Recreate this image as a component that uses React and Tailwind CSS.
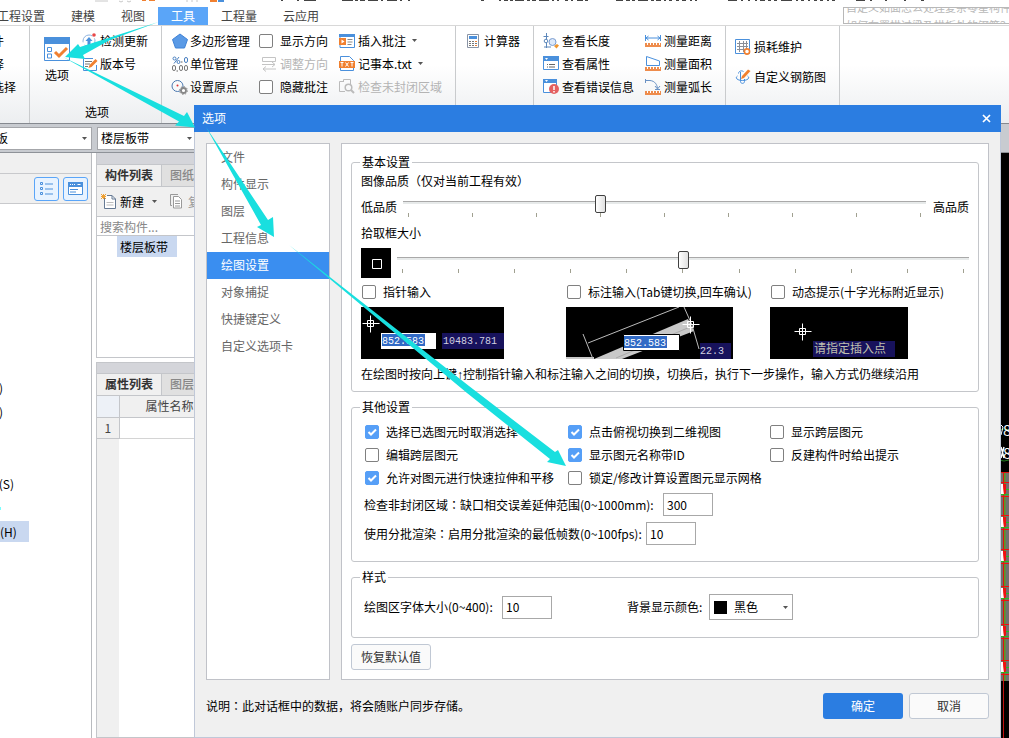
import React, { useState } from "react";

const BLUE = "#4a90dc";
const ORANGE = "#f08030";

function Svg({ w = 18, h = 16, children }) {
  return (
    <svg width={w} height={h} viewBox={`0 0 ${w} ${h}`} className="shrink-0" fill="none" aria-hidden="true">
      {children}
    </svg>
  );
}

function Caret({ className = "" }) {
  return (
    <svg width="5" height="3" viewBox="0 0 5 3" className={`shrink-0 ${className}`} aria-hidden="true">
      <path d="M0 0h5L2.5 3z" fill="#555" />
    </svg>
  );
}

function Colon() {
  return <span className="font-['Noto_Sans_CJK_TC',sans-serif]">：</span>;
}

const Icons = {
  options: (
    <Svg w={26} h={24}>
      <path d="M.5.5h25v23H.5z" fill="#fff" stroke={BLUE} />
      <path d="M0 0h26v7H0z" fill={BLUE} />
      <path d="M3.5 10.500h4v4h-4zM3.500 17h4v4h-4z" stroke={BLUE} />
      <path d="M11 15l4 4 8-8" stroke={ORANGE} strokeWidth="3" />
    </Svg>
  ),
  update: (
    <Svg w={14} h={16}>
      <circle cx="7" cy="8" r="6" stroke="#8fb4e0" strokeDasharray="14 3" />
      <path d="M7 4l3.500 4H8.500v4h-3V8h-2z" fill={BLUE} />
      <circle cx="12" cy="2" r="1.800" fill="#e84848" />
    </Svg>
  ),
  version: (
    <Svg w={16} h={16}>
      <path d="M14.500 9v5.500H1.500v-12H11" stroke={BLUE} />
      <path d="M3 5.500h7M3 8h5M3 10.500h3" stroke="#777" />
      <path d="M6.500 12l1-3L13.500 3l2 2-6 6z" fill={ORANGE} />
    </Svg>
  ),
  polygon: (
    <Svg>
      <path d="M9 1l7.500 5.500L13.500 15h-9L1.500 6.500z" fill="#5a9ae6" stroke="#3f82d6" />
    </Svg>
  ),
  unit: (
    <Svg>
      <circle cx="3.500" cy="2.500" r="1.500" stroke="#4a80c0" />
      <circle cx="7.500" cy="6" r="1.500" stroke="#4a80c0" />
      <path d="M8 1L3 7.500" stroke="#4a80c0" />
      <rect x="13.500" y="1.500" width="3" height="5" rx="1.500" stroke="#4a80c0" />
      <path d="M10 6h1.500M5.500 15H7" stroke="#666" />
      <rect x="1.500" y="9.500" width="3" height="5" rx="1.500" stroke="#777" />
      <rect x="8.500" y="9.500" width="3" height="5" rx="1.500" stroke="#777" />
      <rect x="13.500" y="9.500" width="3" height="5" rx="1.500" stroke="#777" />
    </Svg>
  ),
  origin: (
    <Svg>
      <circle cx="6.500" cy="7" r="5.500" stroke="#4a78b0" />
      <circle cx="6.500" cy="6.500" r="1" fill="#d33" />
      <circle cx="12.500" cy="11.500" r="2.500" fill="#fff" stroke="#888" strokeWidth="1.800" />
      <circle cx="12.500" cy="11.500" r="3.900" stroke="#888" strokeDasharray="1.500 1.500" />
    </Svg>
  ),
  adjust: (
    <Svg w={16} h={16}>
      <path d="M1.500 1.500h13v4h-13zM1 8.500h13M11 6l3 2.500L11 11M15 13H2M5 10.500L2 13l3 2.500" stroke="#c4c4c4" />
    </Svg>
  ),
  annotate: (
    <Svg w={16} h={14}>
      <path d="M1 .5h14.500v13H1z" stroke={BLUE} />
      <path d="M0 0h16v3H0z" fill={BLUE} />
      <path d="M0 4h7v7H0z" fill={ORANGE} />
      <path d="M2.500 5.500v4l3-2z" fill="#fff" />
      <path d="M8.500 5.500h5M8.500 8h5M8.500 10.500h4" stroke="#888" />
    </Svg>
  ),
  txt: (
    <Svg w={16} h={15}>
      <path d="M1.500 14.500V.5h9l4 4v10z" fill="#fff" stroke={BLUE} />
      <path d="M0 5h16v7H0z" fill={ORANGE} />
      <path d="M1.500 6.500h3M3 6.500v4M6.500 6.500l3 4M9.500 6.500l-3 4M11.500 6.500h3M13 6.500v4" stroke="#fff" />
    </Svg>
  ),
  checkArea: (
    <Svg w={16} h={15}>
      <path d="M4.500 3V.5h7v3M4 2.500H.5v10H6M11.500 3v3" stroke="#bbb" />
      <circle cx="9.500" cy="8.500" r="3.300" stroke="#bbb" strokeWidth="1.500" />
      <path d="M12 11l3 3" stroke="#bbb" strokeWidth="2" />
    </Svg>
  ),
  calc: (
    <Svg w={12} h={14}>
      <path d="M.5.5h11v13H.5z" fill="#fff" stroke="#8a94a4" />
      <path d="M2 2h8v3H2z" fill={BLUE} />
      <path d="M2 7.500h2M5 7.500h2M2 9.500h2M5 9.500h2M8 9.500h2M2 11.500h2M5 11.500h2" stroke="#777" />
      <path d="M8 7.500h2M8 11.500h2" stroke={ORANGE} />
    </Svg>
  ),
  length: (
    <Svg w={17} h={16}>
      <path d="M3.500 0v15M.5 3.500h5M1 14h7" stroke="#5c87ba" />
      <circle cx="3" cy="8" r="1.800" fill="#fff" stroke="#5c87ba" />
      <circle cx="9.500" cy="9" r="3.500" fill="#dce8f8" stroke="#7a9cd0" />
      <path d="M11 13l3-2 2 1.500-2.500 3z" fill="#f0962c" />
    </Svg>
  ),
  props: (
    <Svg w={17} h={15}>
      <path d="M.5.5h15v13H.5z" fill="#fff" stroke={BLUE} />
      <path d="M0 0h16v5H0z" fill={BLUE} />
      <path d="M2 2h3l-1.500 2z" fill="#fff" />
      <path d="M4 8.500h1M6 8.500h6M4 11h1M6 11h6" stroke="#666" />
    </Svg>
  ),
  errors: (
    <Svg w={17} h={16}>
      <path d="M.5.5h13v13H.5z" fill="#fff" stroke={BLUE} />
      <path d="M0 0h14v4H0z" fill={BLUE} />
      <path d="M2 1h3L3.500 3z" fill="#fff" />
      <circle cx="11" cy="10" r="5" fill="#e46060" />
      <path d="M11 7v4M11 12v1.500" stroke="#fff" strokeWidth="1.500" />
    </Svg>
  ),
  measureDist: (
    <Svg w={16} h={12}>
      <path d="M.5 0v6M15.500 0v6M1 3h14M3.500 1L1 3l2.500 2M12.500 1L15 3l-2.500 2" stroke={BLUE} />
      <path d="M0 8h16v4H0z" fill="#ee8c4c" />
      <path d="M2.500 8v2M5.500 8v2M8.500 8v2M11.500 8v2M14.500 8v2" stroke="#fff" />
    </Svg>
  ),
  measureArea: (
    <Svg w={16} h={15}>
      <path d="M1.500 9.500V.5L14.500 5v4.500z" stroke={BLUE} />
      <path d="M0 11h16v4H0z" fill="#ee8c4c" />
      <path d="M2.500 11v2M5.500 11v2M8.500 11v2M11.500 11v2M14.500 11v2" stroke="#fff" />
    </Svg>
  ),
  measureArc: (
    <Svg w={16} h={16}>
      <path d="M.5 0v4M1 1.500h4c5 .5 7 4 7.500 8M10 7l2.500 3L15 7M10 10.500h5" stroke="#6a92c4" />
      <path d="M0 12h16v4H0z" fill="#ee8c4c" />
      <path d="M2.500 12v2M5.500 12v2M8.500 12v2M11.500 12v2M14.500 12v2" stroke="#fff" />
    </Svg>
  ),
  grid: (
    <Svg w={16} h={16}>
      <path d="M.5.5h14v14H.5z" stroke={BLUE} />
      <path d="M4.500 2v11M8.500 2v11M11.500 2v9M2 4.500h11M2 7.500h11M2 10.500h9" stroke="#8a8f98" />
      <circle cx="12" cy="12.500" r="2.600" fill="#fff" stroke={ORANGE} strokeWidth="1.600" />
    </Svg>
  ),
  rebar: (
    <Svg w={16} h={16}>
      <path d="M5.500 3v9.500c0 2.500 4 2.500 4 0V10M2.500 7c-3 2 0 4.500 5 4.500s8-2.500 5-4.500M8.500 2.500c-2.500-1.500-5 0-5 2" stroke={BLUE} />
      <path d="M6 10l1-3 6-6.500L15.500 2 9 9z" fill={ORANGE} />
    </Svg>
  ),
  newDoc: (
    <Svg w={16} h={16}>
      <path d="M3.500 4v10.500h11V5L11 1.500H6" fill="#fff" stroke="#667a94" />
      <path d="M11 1.500V5h3.500" stroke="#667a94" />
      <path d="M5.500 8.500h7M5.500 11h7" stroke="#bbb" />
      <path d="M0 0l5 5M5 0L0 5M2.500 0v5M0 2.500h5" stroke="#f0a030" />
    </Svg>
  ),
  copy: (
    <Svg w={13} h={15}>
      <path d="M2 11.500H.5V.5H8" stroke="#999" />
      <path d="M3.500 2.500h5l3 3v8.500h-8z" fill="#fff" stroke="#999" />
      <path d="M5 7h5M5 9.500h5M5 12h5" stroke="#999" />
    </Svg>
  ),
};

const BOX =
  "h-[14px] w-[14px] shrink-0 appearance-none rounded-[2px] border border-[#808080] bg-white checked:border-[#569ff7] checked:bg-[#569ff7]";

function Check({ label, defaultChecked = false }) {
  const [on, setOn] = useState(defaultChecked);
  return (
    <label className="flex items-center gap-[7px] whitespace-nowrap">
      <span className="relative flex shrink-0">
        <input type="checkbox" className={BOX} checked={on} onChange={() => setOn(!on)} />
        {on && (
          <svg className="pointer-events-none absolute inset-0" width="14" height="14" viewBox="0 0 14 14" fill="none">
            <path d="M3.500 7l2.500 2.500 5-5" stroke="#fff" strokeWidth="2" />
          </svg>
        )}
      </span>
      {label}
    </label>
  );
}

function Tool({ icon, label, disabled, caret, slot = "w-[19px]" }) {
  return (
    <button
      type="button"
      disabled={disabled}
      className="flex h-[23px] items-center whitespace-nowrap text-black disabled:text-[#b4b4b4]"
    >
      <span className={`flex shrink-0 ${slot}`}>{icon}</span>
      {label}
      {caret && <Caret className="ml-[6px]" />}
    </button>
  );
}

function Slider({ label, ticks, max, value }) {
  return (
    <div className="flex flex-1 flex-col pb-[3px]">
      <input
        type="range"
        aria-label={label}
        min="0"
        max={max}
        defaultValue={value}
        className="h-[19px] w-full appearance-none bg-[linear-gradient(#a9a9a9_1px,#e7eaea_1px)] bg-[length:100%_3px] bg-[position:0_7px] bg-no-repeat [&::-webkit-slider-thumb]:h-[18px] [&::-webkit-slider-thumb]:w-[11px] [&::-webkit-slider-thumb]:appearance-none [&::-webkit-slider-thumb]:rounded-[2px] [&::-webkit-slider-thumb]:border [&::-webkit-slider-thumb]:border-[#404040] [&::-webkit-slider-thumb]:bg-[linear-gradient(to_right,#ffffff,#e0e0e0)]"
      />
      <div className="flex justify-between px-[5px]">
        {Array.from({ length: ticks }, (_, i) => (
          <span key={i} className="h-[4px] w-px bg-[#a0a090]" />
        ))}
      </div>
    </div>
  );
}

function Group({ title, className = "", children }) {
  return (
    <fieldset className="min-w-0 rounded-[3px] border border-[#c4c6ca]">
      <legend className="ml-[8px] px-[2px]">{title}</legend>
      <div className={className}>{children}</div>
    </fieldset>
  );
}

function Cross({ x, y }) {
  return (
    <path
      d={`M${x - 8} ${y}h17M${x} ${y - 8}v17M${x - 3} ${y - 3}h6v6h-6z`}
      stroke="#fff"
      fill="none"
      transform="translate(.5 .5)"
    />
  );
}

const MONO = { fontFamily: '"Liberation Mono", monospace', fontSize: 10 };

function PointerPreview() {
  return (
    <svg width="143" height="52" viewBox="0 0 143 52" className="block bg-black" role="img" aria-label="指针输入">
      <Cross x={9} y={16} />
      <path d="M20 26h55v16H20z" fill="#fff" />
      <path d="M21 27h43v12H21z" fill="#316ac5" />
      <path d="M81 26h62v16H81z" fill="#17125c" />
      <text x="21" y="37" fill="#fff" style={MONO}>852.583</text>
      <text x="82" y="37" fill="#d0d0e0" style={MONO}>10483.781</text>
    </svg>
  );
}

function DimensionPreview() {
  return (
    <svg width="167" height="52" viewBox="0 0 167 52" className="block bg-black" role="img" aria-label="标注输入">
      <path d="M28 52L122 12l6 12-72 28z" fill="#c8c8c8" />
      <path d="M50 51L124 20" stroke="#aaa" />
      <path d="M0 51h28" stroke="#c8c8c8" strokeWidth="2" />
      <path d="M17 27l10 25M22 36L113 0M118 0l8 18 7 24" stroke="#bbb" fill="none" />
      <path d="M57.500 27.500h56v16h-56z" fill="#fff" stroke="#000" />
      <path d="M58 29h43v12H58z" fill="#316ac5" />
      <path d="M134 36h31v16h-31z" fill="#17125c" />
      <text x="58" y="39" fill="#fff" style={MONO}>852.583</text>
      <text x="134" y="47" fill="#d0d0e0" style={MONO}>22.3</text>
      <Cross x={124} y={17} />
    </svg>
  );
}

function HintPreview() {
  return (
    <svg width="138" height="52" viewBox="0 0 138 52" className="block bg-black" role="img" aria-label="动态提示">
      <Cross x={32} y={24} />
      <path d="M43 34h82v16H43z" fill="#17125c" />
      <text x="44" y="46" fill="#c0c0b0" fontSize="12">请指定插入点</text>
    </svg>
  );
}

function CanvasEdge() {
  const rows = [488, 521, 555, 592, 630, 666];
  return (
    <svg width="8" height="585" viewBox="1001 153 8 585" className="shrink-0" aria-hidden="true">
      <circle cx="1004" cy="445" r="16" stroke="#1e7a1e" fill="none" />
      <text x="1003" y="436" fill="#fff" fontSize="15">8</text>
      <path d="M1001 425l2 2-2 8" stroke="#fff" fill="none" />
      <text x="1003" y="459" fill="#fff" fontSize="15">8</text>
      <path d="M1001 447l3 11M1004 447l-3 11" stroke="#fff" strokeWidth="1.500" />
      <path d="M1001 472h8v209h-8z" fill="#707070" />
      <path d="M1004.500 472v209" stroke="#5a9a20" strokeWidth="2" />
      <path d="M1003.500 472v209M1001 472.500h8" stroke="#e01010" />
      {rows.map((y) => (
        <g key={y}>
          <path d={`M1001 ${y - 5.5}h8M1001 ${y + 8.5}h8`} stroke="#f01010" />
          <path d={`M1001 ${y + 6.5}h8M1005 ${y + 1.5}h4`} stroke="#20c020" />
          <path d={`M1001 ${y - 4}h2l1 10h-3z`} fill="#fff" />
          <path d={`M1003 ${y - 4}h3v9l-2 2z`} fill="#f01010" />
        </g>
      ))}
      <path d="M1003.500 681v57" stroke="#c01010" />
    </svg>
  );
}

function TitleStrip() {
  return (
    <div className="h-[7px] shrink-0 overflow-hidden bg-white">
      <svg width="1009" height="7" viewBox="0 0 1009 7" aria-hidden="true" fill="none">
        <path d="M95 1h13M119 1l2 1 2-1M127 1l2 1 2-1" stroke="#c8c8c8" />
        <path d="M142 .5h4M149 .5h6" stroke={ORANGE} />
        <path d="M187 0v2M192 0v2M197 0v2" stroke="#c8c8c8" />
        <path d="M210 0h7v2h-7z" fill={ORANGE} />
        <path d="M218 0h6v2h-6z" fill={BLUE} />
        <path
          d="M281 .5h2M297 .5h2M304 .5h12M342 .5h11M355 .5h3M360 .5h5M368 .5h10M381 .5h2M387 .5h10M400 .5h2M408 .5h2M481 .5h3M499 .5h2M504 .5h4M510 .5h3M515 .5h9M527 .5h3M532 .5h4M539 .5h10M552 .5h2M557 .5h2M565 .5h3M571 .5h2M577 .5h6M585 .5h3M616 .5h7M626 .5h4M632 .5h3M638 .5h10M651 .5h3M656 .5h5M664 .5h2M669 .5h3M676 .5h3M682 .5h4M690 .5h2M695 .5h2M728 .5h9M741 .5h2M748 .5h2M755 .5h2M760 .5h5M768 .5h3M774 .5h3M781 .5h11M796 .5h2M801 .5h3M808 .5h2M814 .5h3M820 .5h3M827 .5h2M832 .5h3M856 .5h9M870 .5h2M885 .5h2M904 .5h2M921 .5h3"
          stroke="#444"
        />
      </svg>
    </div>
  );
}

const MENUS = ["工程设置", "建模", "视图", "工具", "工程量", "云应用"];

function MenuBar() {
  return (
    <div className="flex h-[19px] shrink-0 justify-between border-b border-[#d8d8d8] bg-white">
      <nav className="-ml-[16px] flex">
        {MENUS.map((m) => (
          <button
            key={m}
            type="button"
            className={m === "工具" ? "bg-[#5aa5f8] px-[13px] text-white" : "px-[13px] text-[#444]"}
          >
            {m}
          </button>
        ))}
      </nav>
      <div className="flex h-[17px] w-[166px] flex-col justify-center overflow-hidden border border-r-0 border-[#b8b8b8] pl-[2px] text-[11px] whitespace-nowrap text-[#b8b8b8]">
        <span>自定义如面怎么处理复杂零星构件</span>
        <span>如何布置拱过梁及拱板外的钢筋？</span>
      </div>
    </div>
  );
}

const RG = "shrink-0 border-r border-[#c9cbcd] pt-[3px]";

function Ribbon() {
  return (
    <div className="flex h-[98px] shrink-0 overflow-hidden border-b border-[#85898f] bg-[linear-gradient(#fff_40%,#eceef0)]">
      <div className={`${RG} flex w-[30px] flex-col`}>
        <div className="flex h-[23px] items-center justify-end pr-[25px]"><span className="whitespace-nowrap">构件</span></div>
        <div className="flex h-[23px] items-center justify-end pr-[25px]"><span className="whitespace-nowrap">选择</span></div>
        <div className="flex h-[23px] items-center justify-end pr-[13px]"><span className="whitespace-nowrap">选择</span></div>
      </div>
      <div className={`${RG} flex w-[132px] flex-col justify-between pb-[2px]`}>
        <div className="flex">
          <button type="button" className="mt-[8px] ml-[14px] flex w-[26px] flex-col items-center gap-[5px] whitespace-nowrap">
            {Icons.options}
            选项
          </button>
          <div className="ml-[12px] flex flex-col">
            <Tool icon={Icons.update} label="检测更新" slot="w-[18px]" />
            <Tool icon={Icons.version} label="版本号" slot="w-[18px]" />
          </div>
        </div>
        <div className="pl-[3px] text-center">选项</div>
      </div>
      <div className={`${RG} flex w-[294px] pl-[9px]`}>
        <div className="w-[88px]">
          <Tool icon={Icons.polygon} label="多边形管理" />
          <Tool icon={Icons.unit} label="单位管理" />
          <Tool icon={Icons.origin} label="设置原点" />
        </div>
        <div className="w-[80px]">
          <div className="flex h-[23px] items-center"><Check label="显示方向" /></div>
          <div className="ml-[2px]"><Tool icon={Icons.adjust} label="调整方向" disabled /></div>
          <div className="flex h-[23px] items-center"><Check label="隐藏批注" /></div>
        </div>
        <div>
          <Tool icon={Icons.annotate} label="插入批注" caret />
          <Tool icon={Icons.txt} label="记事本.txt" caret />
          <Tool icon={Icons.checkArea} label="检查未封闭区域" disabled />
        </div>
      </div>
      <div className={`${RG} w-[78px] pl-[11px]`}>
        <Tool icon={Icons.calc} label="计算器" slot="w-[17px]" />
      </div>
      <div className={`${RG} flex w-[192px] pl-[9px]`}>
        <div className="w-[102px]">
          <Tool icon={Icons.length} label="查看长度" />
          <Tool icon={Icons.props} label="查看属性" />
          <Tool icon={Icons.errors} label="查看错误信息" />
        </div>
        <div>
          <Tool icon={Icons.measureDist} label="测量距离" />
          <Tool icon={Icons.measureArea} label="测量面积" />
          <Tool icon={Icons.measureArc} label="测量弧长" />
        </div>
      </div>
      <div className={`${RG} flex w-[114px] flex-col gap-[7px] pl-[9px]`}>
        <div className="pt-[6px]"><Tool icon={Icons.grid} label="损耗维护" /></div>
        <Tool icon={Icons.rebar} label="自定义钢筋图" />
      </div>
    </div>
  );
}

function Combo({ label, value, className }) {
  return (
    <div className={`relative flex h-[23px] items-center border border-[#a4a6aa] bg-white ${className}`}>
      <select aria-label={label} className="h-full w-full appearance-none bg-white pl-[3px] outline-none">
        <option>{value}</option>
      </select>
      <Caret className="pointer-events-none absolute right-[4px]" />
    </div>
  );
}

const VIEW_BTN = "flex h-[24px] w-[25px] items-center justify-center rounded-[3px] border border-[#5aa5f8] bg-[#e8f3ff]";

function NavPanel() {
  return (
    <div className="flex w-[92px] shrink-0 flex-col border-r border-[#b9bbbf]">
      <div className="h-[21px] border-b border-[#c8c9cc] bg-[#f0f0f0]" />
      <div className="flex h-[30px] items-center justify-end gap-[4px] border-b border-[#c8c9cc] bg-[#f0f0f0] pr-[3px]">
        <button type="button" aria-label="列表" className={VIEW_BTN}>
          <Svg w={13} h={14}>
            <path d="M.5.500h2v2h-2zM.5 5.500h2v2h-2zM.5 10.500h2v2h-2zM5 2h8M5 7h8M5 12h8" stroke={BLUE} />
          </Svg>
        </button>
        <button type="button" aria-label="面板" className={VIEW_BTN}>
          <Svg w={15} h={13}>
            <path d="M.5.5h14v12H.5z" fill="#fff" stroke={BLUE} />
            <path d="M0 0h15v5H0z" fill={BLUE} />
            <path d="M2 2.500h1M4 2.500h1M6 2.500h1M9.500 2.500h3" stroke="#fff" />
            <path d="M2 7.500h8M2 10h6" stroke={BLUE} />
          </Svg>
        </button>
      </div>
      <ul className="flex flex-col pt-[174px]">
        <li className="flex h-[20px] w-[3px] items-center justify-end whitespace-nowrap">(J)</li>
        <li className="mt-[4px] flex h-[20px] w-[3px] items-center justify-end whitespace-nowrap">(J)</li>
        <li className="mt-[52px] flex h-[20px] w-[14px] items-center justify-end whitespace-nowrap">(S)</li>
        <li className="mt-[13px] h-[3px] w-px bg-[#7ff]" />
        <li className="mt-[11px] flex h-[21px] w-[29px] items-center bg-[#c9d8f0]">(H)</li>
      </ul>
    </div>
  );
}

function Tabs({ active, other }) {
  return (
    <div className="flex h-[22px] shrink-0 border-b border-[#c4c6ca] bg-[#e0e0e0] whitespace-nowrap">
      <button type="button" className="w-[65px] shrink-0 border-r border-[#c4c6ca] bg-[#f0f0f0] pb-px font-bold text-[#333]">{active}</button>
      <button type="button" className="pb-px pl-[8px] font-medium text-[#888]">{other}</button>
    </div>
  );
}

function ListPanels() {
  return (
    <div className="ml-[4px] flex w-[160px] shrink-0 flex-col gap-[4px]">
      <section className="flex h-[205px] shrink-0 flex-col border border-t-0 border-[#c4c6ca]">
        <div className="h-[12px] shrink-0 border-b border-[#c4c6ca] bg-[#d4d5da]" />
        <Tabs active="构件列表" other="图纸管理" />
        <div className="flex h-[30px] shrink-0 items-center border-b border-[#c4c6ca] bg-[#f0f0f0] pl-[4px] whitespace-nowrap">
          {Icons.newDoc}
          <span className="ml-[3px]">新建</span>
          <Caret className="ml-[8px]" />
          <span className="ml-[13px] flex items-center gap-[5px] text-[#999]">{Icons.copy}复制</span>
        </div>
        <input
          aria-label="搜索构件"
          placeholder="搜索构件..."
          className="h-[19px] w-full shrink-0 border-b border-[#c4c6ca] px-[3px] outline-none placeholder:text-[#888]"
        />
        <div className="ml-[20px] flex h-[21px] w-[60px] items-center bg-[#c9d8f0] pl-[3px]">楼层板带</div>
      </section>
      <section className="flex flex-1 flex-col border border-[#c4c6ca]">
        <div className="h-[11px] shrink-0 border-b border-[#c4c6ca] bg-[#d4d5da]" />
        <Tabs active="属性列表" other="图层管理" />
        <div className="flex flex-1 bg-[linear-gradient(to_right,#f0f0f0_22px,#fff_22px)]">
          <table className="h-[42px] w-full table-fixed border-collapse text-[#444]">
            <colgroup>
              <col className="w-[22px]" />
              <col />
            </colgroup>
            <tbody>
              <tr className="h-[21px]">
                <th className="border-r border-b border-[#c4c6ca] bg-[#edf1f7] p-0" />
                <th className="border-b border-[#c4c6ca] bg-[#f0f0f0] p-0 pl-[26px] text-left font-normal whitespace-nowrap">属性名称</th>
              </tr>
              <tr className="h-[21px]">
                <td className="border-r border-b border-[#c4c6ca] bg-[#f0f0f0] p-0 text-center">1</td>
                <td className="border-b border-[#d4d4d4] p-0" />
              </tr>
            </tbody>
          </table>
        </div>
      </section>
    </div>
  );
}

const PAGES = ["文件", "构件显示", "图层", "工程信息", "绘图设置", "对象捕捉", "快捷键定义", "自定义选项卡"];
const FIELD = "h-[23px] w-[50px] border border-[#a8a8a8] bg-white px-[3px] pb-px outline-none";

function OptionsDialog() {
  const [page, setPage] = useState("绘图设置");
  return (
    <div
      role="dialog"
      aria-label="选项"
      className="absolute top-[105px] right-[8px] left-[194px] flex flex-col border border-t-0 border-[#c0c8d8] bg-[#f0f0f0]"
    >
      <div className="-mx-px flex h-[27px] items-center justify-between bg-[#2b7de1] pr-[10px] pb-px pl-[8px] text-white">
        <span>选项</span>
        <button type="button" aria-label="关闭" className="flex h-[9px] w-[9px] items-center justify-center">
          <svg width="9" height="9" viewBox="0 0 9 9" fill="none">
            <path d="M1 1l7 7M8 1L1 8" stroke="#fff" strokeWidth="1.700" />
          </svg>
        </button>
      </div>
      <div className="flex gap-[11px] px-[11px] pt-[11px]">
        <nav className="flex w-[124px] shrink-0 flex-col border border-[#c0c2c8] bg-white">
          {PAGES.map((p) => (
            <button
              key={p}
              type="button"
              onClick={() => setPage(p)}
              className={
                p === page
                  ? "h-[27px] bg-[#3a8ef0] pb-[2px] pl-[14px] text-left text-white"
                  : "h-[27px] pb-[2px] pl-[14px] text-left text-[#666]"
              }
            >
              {p}
            </button>
          ))}
        </nav>
        <div className="flex flex-1 flex-col items-stretch gap-[6px] border border-[#c0c2c8] bg-white p-[9px]">
          <Group title="基本设置" className="px-[9px] pb-[8px]">
            <div className="flex h-[20px] items-center">图像品质（仅对当前工程有效）</div>
            <div className="flex h-[32px] items-center">
              <span className="w-[42px]">低品质</span>
              <Slider label="图像品质" ticks={9} max={8} value={3} />
              <span className="w-[43px] pl-[7px]">高品质</span>
            </div>
            <div className="flex h-[20px] items-center">拾取框大小</div>
            <div className="mt-[5px] flex h-[30px] items-center gap-[6px]">
              <svg width="30" height="30" viewBox="0 0 30 30" className="shrink-0 bg-black" aria-hidden="true">
                <path d="M11.500 11.500h9v9h-9z" fill="none" stroke="#fff" />
              </svg>
              <Slider label="拾取框大小" ticks={11} max={10} value={5} />
            </div>
            <div className="mt-[5px] grid grid-cols-[205px_204px_1fr] gap-y-[6px]">
              <div className="pl-px"><Check label="指针输入" /></div>
              <div className="pl-px"><Check label="标注输入(Tab键切换,回车确认)" /></div>
              <div className="pl-px"><Check label="动态提示(十字光标附近显示)" /></div>
              <PointerPreview />
              <DimensionPreview />
              <HintPreview />
            </div>
            <div className="mt-[6px] h-[18px] whitespace-nowrap">
              在绘图时按向上键<span className="font-['Liberation_Sans',sans-serif]">↑</span>控制指针输入和标注输入之间的切换，切换后，执行下一步操作，输入方式仍继续沿用
            </div>
          </Group>
          <Group title="其他设置" className="px-[12px] pb-[16px]">
            <div className="grid auto-rows-[23px] grid-cols-[203px_202px_1fr] items-center pt-[4px] pl-px">
              <Check label="选择已选图元时取消选择" defaultChecked />
              <Check label="点击俯视切换到二维视图" defaultChecked />
              <Check label="显示跨层图元" />
              <Check label="编辑跨层图元" />
              <Check label="显示图元名称带ID" defaultChecked />
              <Check label="反建构件时给出提示" />
              <Check label="允许对图元进行快速拉伸和平移" defaultChecked />
              <Check label="锁定/修改计算设置图元显示网格" />
            </div>
            <div className="mt-[4px] flex items-center">
              <label htmlFor="gap-range" className="w-[299px] whitespace-nowrap">检查非封闭区域<Colon />缺口相交误差延伸范围(0~1000mm):</label>
              <input id="gap-range" defaultValue="300" className={FIELD} />
            </div>
            <div className="mt-[6px] flex items-center">
              <label htmlFor="min-fps" className="w-[282px] whitespace-nowrap">使用分批渲染<Colon />启用分批渲染的最低帧数(0~100fps):</label>
              <input id="min-fps" defaultValue="10" className={FIELD} />
            </div>
          </Group>
          <Group title="样式" className="px-[12px] pb-[17px]">
            <div className="flex items-center pt-[8px]">
              <label htmlFor="font-size" className="w-[138px] whitespace-nowrap">绘图区字体大小(0~400):</label>
              <input id="font-size" defaultValue="10" className={FIELD} />
              <label htmlFor="bg-color" className="ml-[75px] w-[82px] whitespace-nowrap">背景显示颜色:</label>
              <div className="relative flex h-[26px] w-[84px] items-center border border-[#a8a8a8] bg-white">
                <span className="pointer-events-none absolute left-[4px] h-[13px] w-[13px] bg-black" />
                <select id="bg-color" className="h-full w-full appearance-none bg-transparent pl-[24px] outline-none">
                  <option>黑色</option>
                </select>
                <Caret className="pointer-events-none absolute right-[4px]" />
              </div>
            </div>
          </Group>
          <button type="button" className="h-[26px] w-[80px] rounded-[3px] border border-[#c0c8d4] bg-[#fafafa] text-[#333]">恢复默认值</button>
        </div>
      </div>
      <div className="flex items-center gap-[6px] px-[11px] pt-[13px] pb-[18px]">
        <p className="flex-1">说明<Colon />此对话框中的数据，将会随账户同步存储。</p>
        <button type="button" className="h-[26px] w-[80px] rounded-[3px] bg-[#2b7de1] text-white">确定</button>
        <button type="button" className="h-[26px] w-[80px] rounded-[3px] border border-[#c0c8d4] bg-[#fafafa] text-[#333]">取消</button>
      </div>
    </div>
  );
}

function GuideArrows() {
  return (
    <svg width="1009" height="738" viewBox="0 0 1009 738" className="pointer-events-none absolute top-0 left-0" aria-hidden="true">
      <g fill="#19dfdf">
        <path d="M158.500 22L80 47l-2-3L65 57l20 2-2-4 27-15z" />
        <path d="M63 57l121 59 3-4 8 15.500-20-2 4-4z" />
        <path d="M206 127l62 93 5-3 1 20-17-10 4-2z" />
        <path d="M289 245l180 141 86 66 3-2 8 16-19-4 3-3-83-66z" />
      </g>
    </svg>
  );
}

export default function App() {
  return (
    <div className="relative flex h-screen flex-col overflow-hidden bg-white font-['Noto_Sans_CJK_SC',sans-serif] text-xs leading-[18px] text-black">
      <TitleStrip />
      <MenuBar />
      <Ribbon />
      <div className="flex h-[29px] shrink-0 items-center gap-[5px] border-b border-[#8e9298] bg-[#c8cbd0]">
        <Combo label="构件类型" value="板" className="-ml-[8px] w-[100px]" />
        <Combo label="构件" value="楼层板带" className="w-[100px]" />
      </div>
      <div className="flex flex-1">
        <NavPanel />
        <ListPanels />
        <div className="flex flex-1 justify-end bg-black">
          <CanvasEdge />
        </div>
      </div>
      <OptionsDialog />
      <GuideArrows />
    </div>
  );
}
